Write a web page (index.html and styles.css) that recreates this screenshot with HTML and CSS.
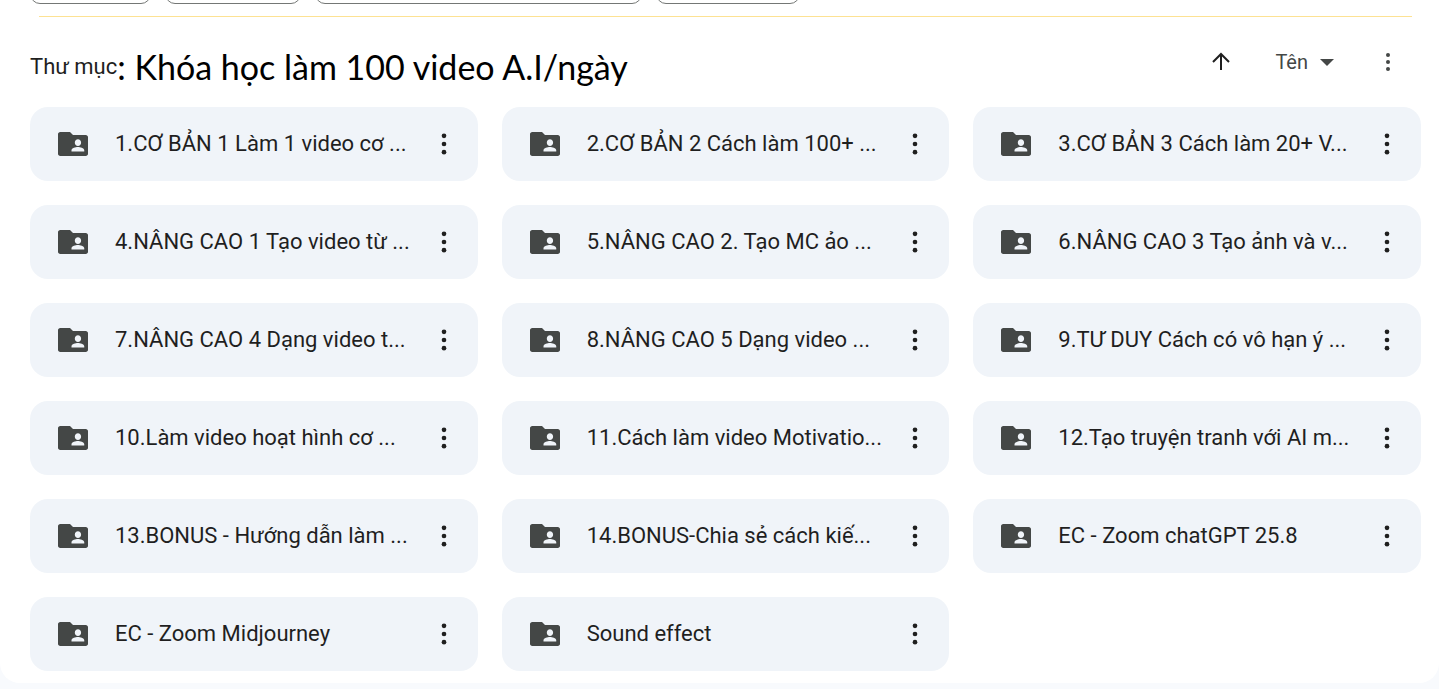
FILE: index.html
```html
<!DOCTYPE html>
<html lang="vi">
<head>
    <meta charset="UTF-8">
    <meta name="viewport" content="width=device-width, initial-scale=1.0">
    <title>Thư mục</title>
    <link rel="stylesheet" href="styles.css">
</head>
<body>
    <main class="panel">
        <div class="filters">
            <button class="chip" aria-label="Loại"></button>
            <button class="chip" aria-label="Người"></button>
            <button class="chip" aria-label="Lần sửa đổi gần đây nhất"></button>
            <button class="chip" aria-label="Nguồn"></button>
        </div>
        <hr class="divider">

        <header class="toolbar">
            <h1 class="heading"><span class="heading-label">Thư mục</span><span>: Khóa học làm 100 video A.I/ngày</span></h1>
            <div class="sort">
                <button class="icon-btn" aria-label="Đảo ngược thứ tự">
                    <svg class="arrow" viewBox="0 0 24 24"><path d="M12 20V4M4 12l8-8 8 8"/></svg>
                </button>
                <button class="sort-btn" aria-haspopup="true">Tên
                    <svg class="caret" viewBox="0 0 14 7"><path d="M0 0h14L7 7z"/></svg>
                </button>
                <button class="icon-btn" aria-label="Tùy chọn sắp xếp">
                    <svg class="dots-small" viewBox="0 0 24 24"><use href="#dots"/></svg>
                </button>
            </div>
        </header>

        <div class="folders" id="folders"></div>
    </main>

    <svg class="sprite" aria-hidden="true">
        <symbol id="folder" viewBox="0 0 24 24">
            <path d="M20.500 6h-8.500l-2-2H3.500c-.830 0-1.500.670-1.500 1.500v13c0 .830.670 1.500 1.500 1.500h17c.830 0 1.500-.670 1.500-1.500V7.500c0-.830-.670-1.500-1.500-1.500zM15.300 8.900c1.200 0 2.100 1 2.100 2.200s-.900 2.200-2.100 2.200-2.100-1-2.100-2.200.900-2.200 2.100-2.200zM19.500 17h-8.500v-.900c0-1.400 2.800-2.100 4.250-2.100s4.250.700 4.250 2.100v.900z"/>
        </symbol>
        <symbol id="dots" viewBox="0 0 24 24">
            <circle cx="12" cy="5" r="2"/>
            <circle cx="12" cy="12" r="2"/>
            <circle cx="12" cy="19" r="2"/>
        </symbol>
    </svg>

    <script>
        const folders = [
            '1.CƠ BẢN 1 Làm 1 video cơ ...',
            '2.CƠ BẢN 2 Cách làm 100+ ...',
            '3.CƠ BẢN 3 Cách làm 20+ V...',
            '4.NÂNG CAO 1 Tạo video từ ...',
            '5.NÂNG CAO 2. Tạo MC ảo ...',
            '6.NÂNG CAO 3 Tạo ảnh và v...',
            '7.NÂNG CAO 4 Dạng video t...',
            '8.NÂNG CAO 5 Dạng video ...',
            '9.TƯ DUY Cách có vô hạn ý ...',
            '10.Làm video hoạt hình cơ ...',
            '11.Cách làm video Motivatio...',
            '12.Tạo truyện tranh với AI m...',
            '13.BONUS - Hướng dẫn làm ...',
            '14.BONUS-Chia sẻ cách kiế...',
            'EC - Zoom chatGPT 25.8',
            'EC - Zoom Midjourney',
            'Sound effect'
        ];

        // Build one card per folder
        document.getElementById('folders').innerHTML = folders.map(name => `
            <div class="folder">
                <svg class="folder-icon"><use href="#folder"/></svg>
                <a class="folder-name" href="#">${name}</a>
                <button class="icon-btn" aria-label="Thao tác khác">
                    <svg class="dots"><use href="#dots"/></svg>
                </button>
            </div>`).join('');
    </script>
</body>
</html>
```

FILE: styles.css
```css
* {
    box-sizing: border-box;
}
body {
    margin: 0;
    background-color: #f8fafd;
    font-family: Roboto, "Noto Sans", sans-serif;
    color: #1f1f1f;
    overflow-x: hidden;
}
button {
    padding: 0;
    border: none;
    background: none;
    color: inherit;
    font: inherit;
    cursor: pointer;
}
svg {
    display: block;
    flex: none;
}
.sprite {
    display: none;
}
.panel {
    padding: 0 18px 12px 30px;
    background-color: #fff;
    border-radius: 0 0 20px 20px;
    overflow: hidden;
}

/* Filter chips, scrolled almost out of view */
.filters {
    display: grid;
    grid-template-columns: 121px 136px 327px 144px;
    gap: 14px;
    margin-top: -36px;
}
.chip {
    height: 40px;
    border: 1px solid #747775;
    border-radius: 10px;
}
.divider {
    height: 1px;
    margin: 12px 9px 0;
    border: none;
    background-color: #fde293;
}

.toolbar {
    display: flex;
    justify-content: space-between;
    align-items: center;
    height: 90px;
}
.heading {
    display: flex;
    align-items: center;
    margin: 0;
    padding-top: 8px;
    font-family: Lato, "Noto Sans", sans-serif;
    font-size: 34px;
    font-weight: 400;
    color: #000;
}
.heading-label {
    font-family: Roboto, "Noto Sans", sans-serif;
    font-size: 22px;
    color: #1f1f1f;
}
.sort {
    display: flex;
    align-items: center;
    gap: 36px;
    margin-right: 15px;
    color: #444746;
}
.icon-btn {
    display: flex;
    justify-content: center;
    align-items: center;
    width: 36px;
    height: 36px;
}
.sort-btn {
    display: flex;
    align-items: center;
    gap: 12px;
    font-size: 20px;
}
.arrow {
    width: 24px;
    height: 24px;
    fill: none;
    stroke: #1f1f1f;
    stroke-width: 2;
}
.caret {
    width: 14px;
    height: 7px;
    fill: #444746;
}
.dots-small {
    width: 24px;
    height: 24px;
    fill: #444746;
}

.folders {
    display: grid;
    grid-template-columns: repeat(3, minmax(0, 1fr));
    gap: 24px;
}
.folder {
    display: flex;
    align-items: center;
    height: 74px;
    padding: 0 16px 0 25px;
    background-color: #f0f4f9;
    border-radius: 18px;
}
.folder-icon {
    width: 36px;
    height: 36px;
    fill: #444746;
}
.folder-name {
    flex: 1;
    min-width: 0;
    margin-left: 24px;
    padding-bottom: 2px;
    font-size: 22px;
    color: inherit;
    text-decoration: none;
    white-space: nowrap;
}
.dots {
    width: 28px;
    height: 28px;
    fill: #1f1f1f;
}
```
